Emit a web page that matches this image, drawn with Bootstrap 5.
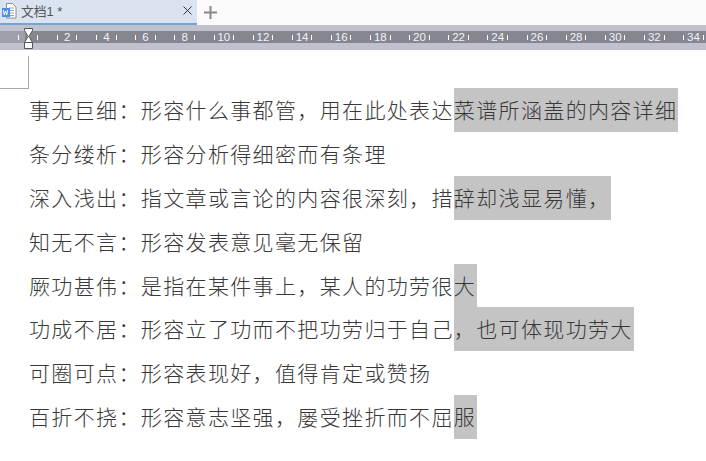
<!doctype html>
<html lang="zh"><head><meta charset="utf-8"><title>文档1</title>
<link href="https://cdn.jsdelivr.net/npm/bootstrap@5.3.0/dist/css/bootstrap.min.css" rel="stylesheet">
<style>
html,body{margin:0;height:461px;overflow:hidden;background:#fff}
body{font-family:"Noto Sans CJK SC",sans-serif}
.tabbar{height:25px;background:#fafafa}
.doctab{width:197px;background:#dae3f0;border-bottom:2px solid #76a3d6;padding:0 5px 2px 2px;color:#555;font:12.800px "Liberation Sans","Noto Sans CJK SC",sans-serif}
.addbtn{width:13px;height:13px;margin:0 0 1px 7px;color:#888}
.closebtn{width:9px;height:9px}
.rulerbar{height:25px;background:#bfc2cc;padding:6px 0 7px;position:relative}
.rulerstrip{height:12px;background:#85868f;overflow:hidden;position:relative}
.rulerlead{width:8.500px;flex:none}
.rulershade{position:absolute;left:0;top:0;bottom:0;width:25px;background:#9ea0a9}
.rulercell{width:39.150px;flex:none;padding:0 9.300px;color:#f2f4fa;font:11.500px/12px "Liberation Sans",sans-serif;position:relative}
.rulertick{width:1px;height:5px;background:#fff}
.indentmark{position:absolute;left:24px;top:3px}
.cornerwrap{height:38px;padding-top:6px}
.cornermark{width:29px;height:33px;border-right:1px solid #a8a8a8;border-bottom:1px solid #a8a8a8}
.docbody{padding-left:29px}
.docline{height:43.900px;line-height:42.500px;font-size:21px;letter-spacing:1.360px;color:#383838;font-weight:300;white-space:nowrap}
.hilite{background:#c4c4c4;display:inline-block;height:43.900px;padding-right:1px}
</style></head><body>
<div class="tabbar d-flex align-items-stretch">
<div class="doctab d-flex align-items-center gap-1">
<svg width="15" height="17" viewBox="0 0 15 17"><path d="M4.500 1.500h6l3.500 3.500v11H4.500z" fill="#fff" stroke="#8a8f99"/><path d="M7 6h5M7 8.500h5M7 11h5M7 13.500h5" stroke="#9aa0aa"/><rect x="0" y="6" width="8" height="9" fill="#4c8fe0"/><path d="M1.300 8l1 5 1.200-4 1.200 4 1-5" fill="none" stroke="#fff"/></svg>
<span class="flex-grow-1">文档1 *</span>
<svg class="closebtn" viewBox="0 0 9 9"><path d="M.5.500l8 8M8.500.500l-8 8" stroke="#333" fill="none"/></svg>
</div>
<svg class="addbtn align-self-center" viewBox="0 0 13 13"><path d="M6.500 0v13M0 6.500h13" stroke="currentColor" stroke-width="2"/></svg>
</div>
<div class="rulerbar">
<div class="rulerstrip d-flex">
<div class="rulershade"></div>
<div class="rulerlead"></div>
<div class="rulercell d-flex justify-content-between align-items-center"><i class="rulertick"></i><i class="rulertick"></i></div>
<div class="rulercell d-flex justify-content-between align-items-center"><i class="rulertick"></i><span>2</span><i class="rulertick"></i></div>
<div class="rulercell d-flex justify-content-between align-items-center"><i class="rulertick"></i><span>4</span><i class="rulertick"></i></div>
<div class="rulercell d-flex justify-content-between align-items-center"><i class="rulertick"></i><span>6</span><i class="rulertick"></i></div>
<div class="rulercell d-flex justify-content-between align-items-center"><i class="rulertick"></i><span>8</span><i class="rulertick"></i></div>
<div class="rulercell d-flex justify-content-between align-items-center"><i class="rulertick"></i><span>10</span><i class="rulertick"></i></div>
<div class="rulercell d-flex justify-content-between align-items-center"><i class="rulertick"></i><span>12</span><i class="rulertick"></i></div>
<div class="rulercell d-flex justify-content-between align-items-center"><i class="rulertick"></i><span>14</span><i class="rulertick"></i></div>
<div class="rulercell d-flex justify-content-between align-items-center"><i class="rulertick"></i><span>16</span><i class="rulertick"></i></div>
<div class="rulercell d-flex justify-content-between align-items-center"><i class="rulertick"></i><span>18</span><i class="rulertick"></i></div>
<div class="rulercell d-flex justify-content-between align-items-center"><i class="rulertick"></i><span>20</span><i class="rulertick"></i></div>
<div class="rulercell d-flex justify-content-between align-items-center"><i class="rulertick"></i><span>22</span><i class="rulertick"></i></div>
<div class="rulercell d-flex justify-content-between align-items-center"><i class="rulertick"></i><span>24</span><i class="rulertick"></i></div>
<div class="rulercell d-flex justify-content-between align-items-center"><i class="rulertick"></i><span>26</span><i class="rulertick"></i></div>
<div class="rulercell d-flex justify-content-between align-items-center"><i class="rulertick"></i><span>28</span><i class="rulertick"></i></div>
<div class="rulercell d-flex justify-content-between align-items-center"><i class="rulertick"></i><span>30</span><i class="rulertick"></i></div>
<div class="rulercell d-flex justify-content-between align-items-center"><i class="rulertick"></i><span>32</span><i class="rulertick"></i></div>
<div class="rulercell d-flex justify-content-between align-items-center"><i class="rulertick"></i><span>34</span><i class="rulertick"></i></div>
</div>
<svg class="indentmark" width="10" height="22" viewBox="0 0 10 22"><path d="M.5.500h8v2L5.500 7.500l-1 1 1 1 3 5v6h-8v-6l3-5 1-1-1-1L.5 2.500z" fill="#fff" stroke="#555"/><path d="M.5 14.500h8" stroke="#555"/></svg>
</div>
<div class="cornerwrap"><div class="cornermark"></div></div>
<div class="docbody">
<div class="docline">事无巨细：形容什么事都管，用在此处表达<span class="hilite">菜谱所涵盖的内容详细</span></div>
<div class="docline">条分缕析：形容分析得细密而有条理</div>
<div class="docline">深入浅出：指文章或言论的内容很深刻，措<span class="hilite">辞却浅显易懂，</span></div>
<div class="docline">知无不言：形容发表意见毫无保留</div>
<div class="docline">厥功甚伟：是指在某件事上，某人的功劳很<span class="hilite">大</span></div>
<div class="docline">功成不居：形容立了功而不把功劳归于自己<span class="hilite">，也可体现功劳大</span></div>
<div class="docline">可圈可点：形容表现好，值得肯定或赞扬</div>
<div class="docline">百折不挠：形容意志坚强，屡受挫折而不屈<span class="hilite">服</span></div>
</div>
</body></html>
